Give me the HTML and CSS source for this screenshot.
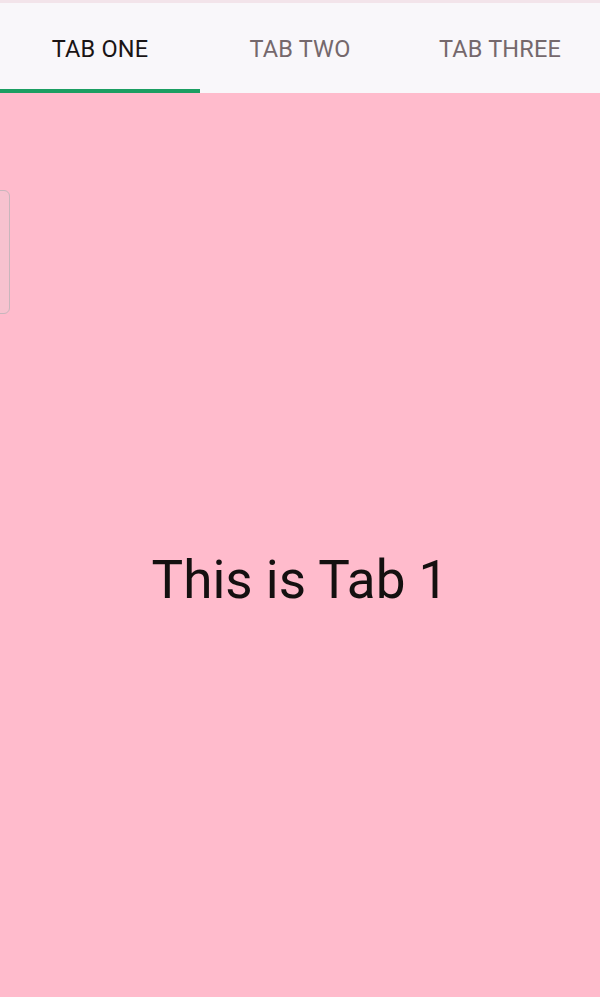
FILE: index.html
```html
<!DOCTYPE html>
<html>
<head>
<meta charset="utf-8">
<link rel="stylesheet" href="styles.css">
</head>
<body>
<div class="app">
  <div class="tabbar">
    <div class="tab active">TAB ONE</div>
    <div class="tab">TAB TWO</div>
    <div class="tab">TAB THREE</div>
  </div>
  <div class="content">
    <div class="handle"></div>
    <div class="message">This is Tab 1</div>
  </div>
</div>
</body>
</html>
```
FILE: styles.css
```css
html, body {
  margin: 0;
  padding: 0;
  width: 600px;
  height: 997px;
  overflow: hidden;
}
body {
  font-family: Roboto, "Noto Sans", sans-serif;
  background: #ffbbcc;
}
.app {
  display: flex;
  flex-direction: column;
  height: 997px;
}
.tabbar {
  display: grid;
  grid-template-columns: 200px 200px 200px;
  height: 90px;
  background: #f9f7fa;
  border-top: 3px solid #f3e4ea;
}
.tab {
  display: flex;
  align-items: center;
  justify-content: center;
  font-size: 23.5px;
  font-weight: 400;
  letter-spacing: 0.2px;
  color: #75686c;
  box-sizing: border-box;
  padding-top: 2px;
}
.tab.active {
  color: #1a1414;
  border-bottom: 4px solid #1b9e62;
  padding-top: 6px;
}
.content {
  flex: 1;
  position: relative;
  display: flex;
  align-items: center;
  justify-content: center;
  padding-top: 70px;
}
.message {
  font-size: 53px;
  color: #141010;
}
.handle {
  position: absolute;
  left: -6px;
  top: 97px;
  width: 14px;
  height: 122px;
  border: 1.5px solid #c8b6bc;
  border-radius: 6px;
  background: #f7c2cf;
}
```
